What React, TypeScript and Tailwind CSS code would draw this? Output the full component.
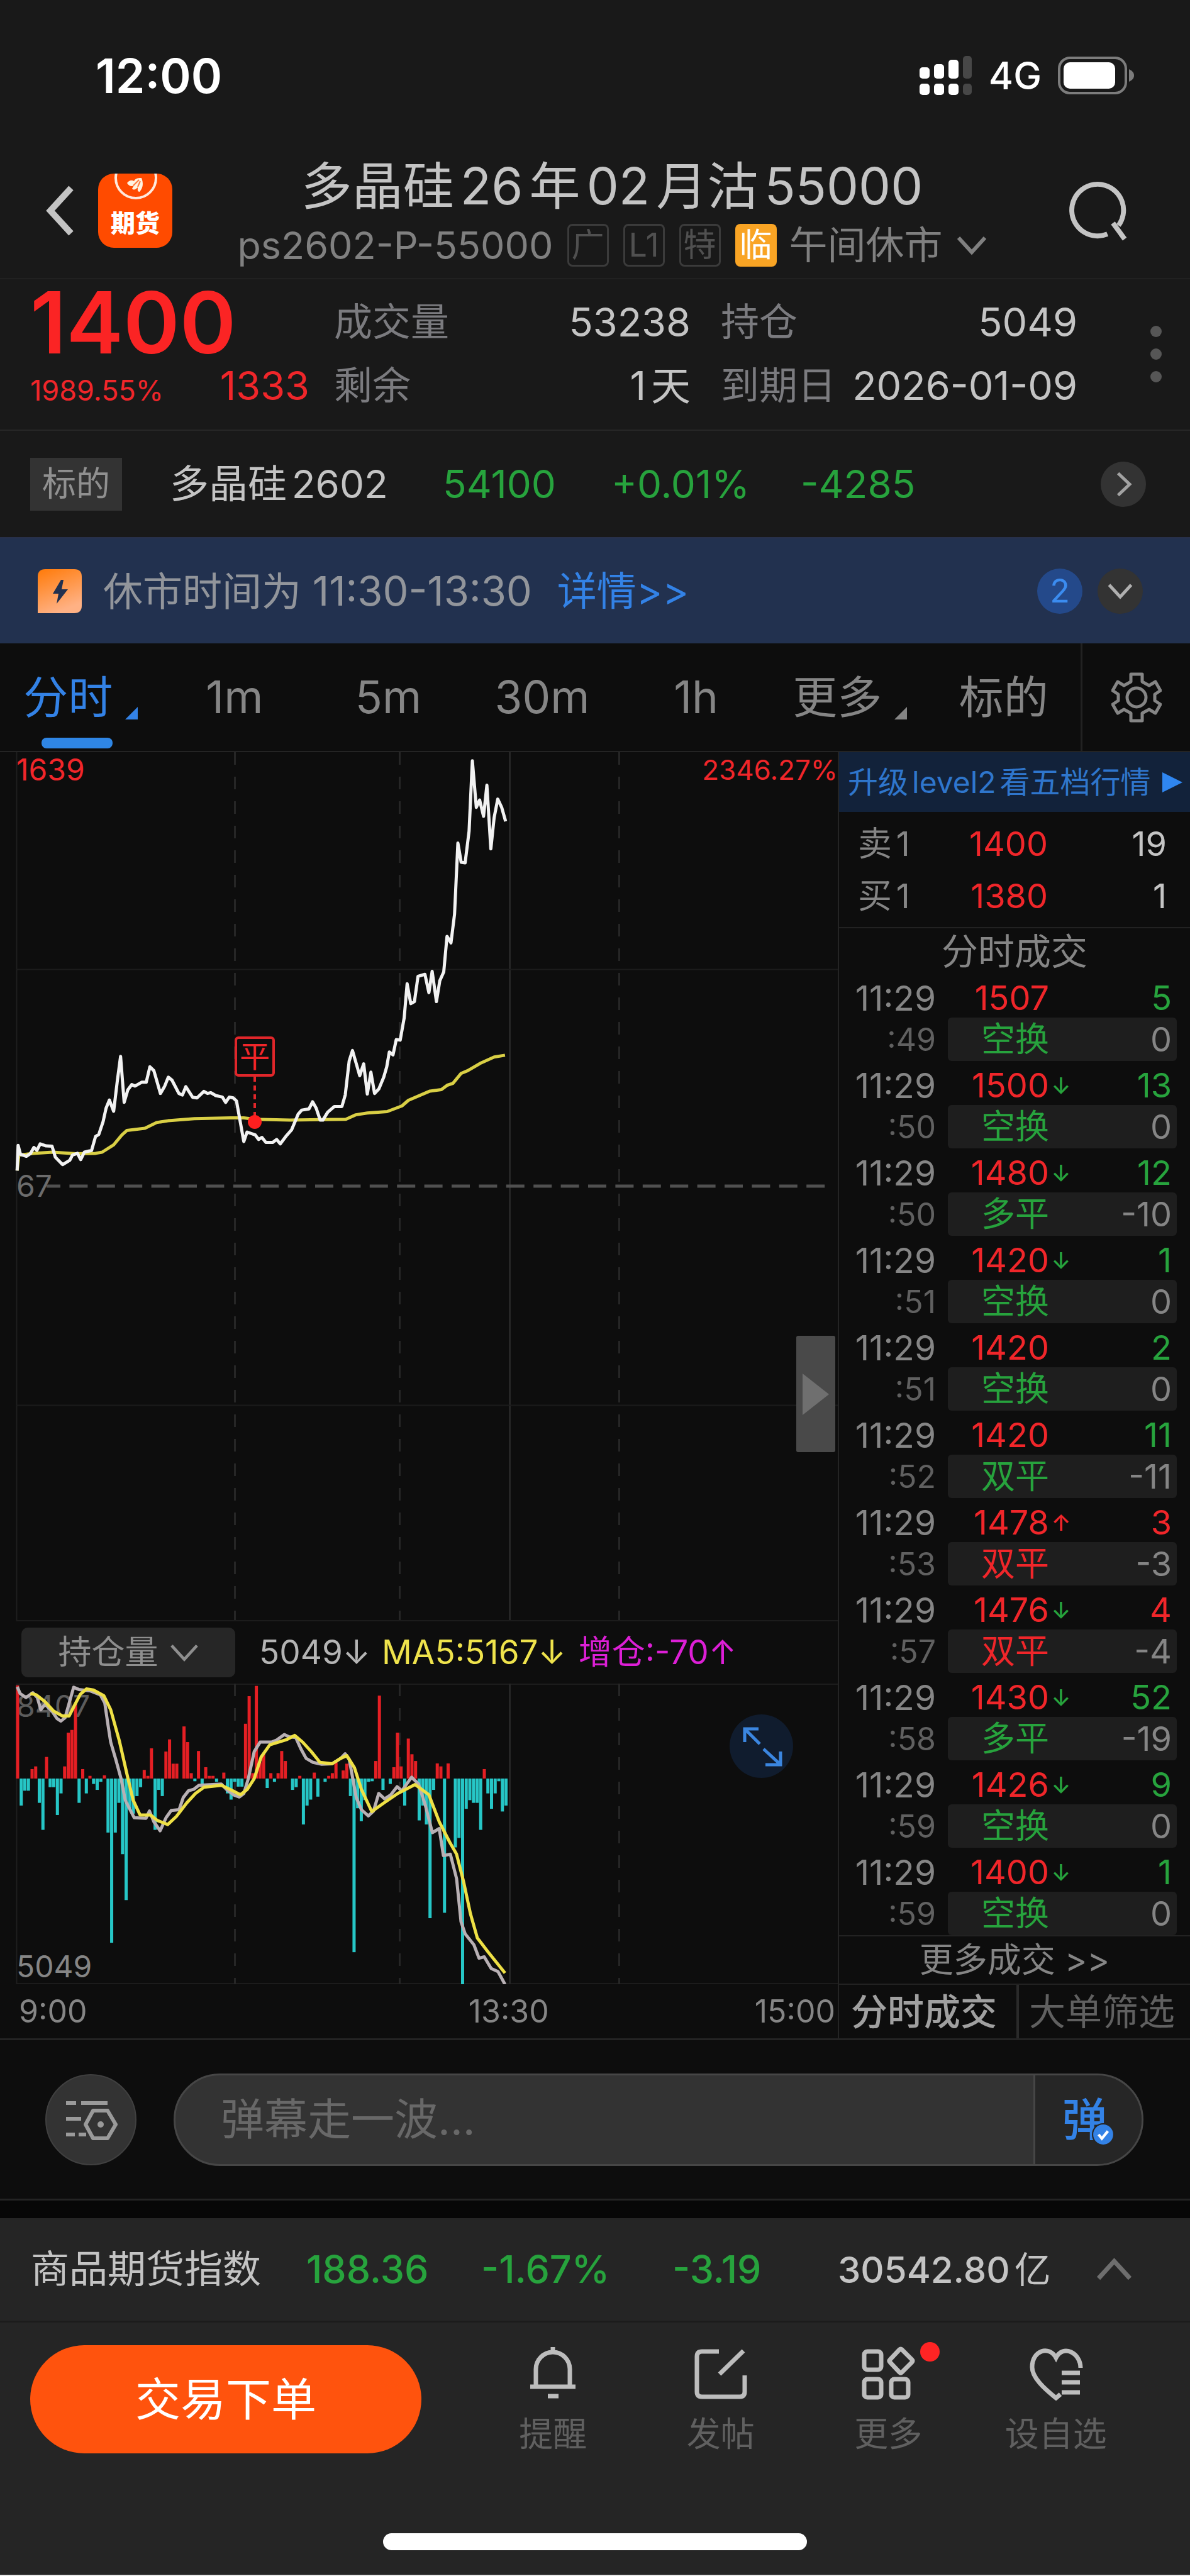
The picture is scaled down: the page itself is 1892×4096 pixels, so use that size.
import React from "react";

type Point = [number, number];

const PRICE: Point[] = [
  [52, 1440], [55, 1355], [62, 1385], [80, 1392], [92, 1383], [103, 1362], [112, 1372], [122, 1350], [140, 1357], [158, 1358],
  [168, 1395], [190, 1420], [212, 1405], [220, 1388], [235, 1382], [245, 1403], [256, 1378], [278, 1372], [290, 1325], [300, 1318],
  [313, 1275], [322, 1230], [332, 1202], [345, 1240], [356, 1140], [366, 1055], [377, 1210], [388, 1168], [400, 1150], [410, 1155],
  [430, 1142], [444, 1142], [455, 1090], [467, 1103], [487, 1180], [500, 1155], [511, 1125], [522, 1135], [543, 1180], [554, 1185],
  [564, 1157], [585, 1193], [598, 1195], [619, 1173], [630, 1180], [640, 1177], [655, 1187], [675, 1192], [685, 1210], [696, 1192],
  [708, 1195], [718, 1205], [740, 1342], [750, 1310], [775, 1320], [785, 1335], [795, 1328], [807, 1345], [828, 1345], [840, 1335],
  [851, 1350], [870, 1322], [885, 1303], [905, 1250], [916, 1236], [938, 1232], [949, 1208], [960, 1230], [972, 1270], [980, 1270],
  [995, 1243], [1015, 1224], [1038, 1224], [1048, 1185], [1060, 1070], [1070, 1035], [1092, 1120], [1104, 1080], [1115, 1182],
  [1126, 1108], [1137, 1180], [1150, 1165], [1165, 1125], [1174, 1090], [1182, 1040], [1193, 1050], [1203, 998], [1215, 1000],
  [1227, 925], [1236, 810], [1247, 877], [1258, 870], [1269, 785], [1290, 778], [1302, 840], [1312, 768], [1325, 870], [1335, 800],
  [1347, 770], [1357, 650], [1369, 672], [1380, 575], [1390, 335], [1400, 400], [1412, 402], [1424, 295], [1434, 58], [1446, 215],
  [1456, 190], [1468, 245], [1478, 140], [1490, 355], [1500, 250], [1511, 187], [1523, 215], [1535, 262],
];

const AVERAGE: Point[] = [
  [52, 1440], [57, 1388], [100, 1382], [160, 1378], [230, 1383], [290, 1382], [310, 1378], [345, 1353], [370, 1320], [385, 1305],
  [440, 1297], [475, 1278], [510, 1272], [590, 1265], [700, 1262], [740, 1262], [775, 1267], [880, 1270], [1050, 1267],
  [1080, 1252], [1115, 1246], [1175, 1241], [1220, 1222], [1240, 1203], [1305, 1172], [1340, 1167], [1358, 1152], [1375, 1146],
  [1400, 1112], [1420, 1103], [1460, 1077], [1500, 1057], [1533, 1051],
];

const INTEREST: Point[] = [
  [50, 260], [58, 285], [75, 300], [95, 282], [108, 300], [118, 345], [130, 325], [150, 350], [165, 378], [176, 387], [188, 375],
  [200, 320], [213, 262], [228, 270], [260, 275], [290, 290], [303, 320], [312, 400], [320, 465], [335, 530], [350, 600],
  [362, 680], [388, 745], [422, 747], [432, 720], [445, 760], [463, 793], [480, 745], [495, 718], [518, 715], [530, 670],
  [545, 645], [560, 640], [575, 625], [640, 620], [655, 640], [675, 660], [692, 668], [705, 655], [718, 600], [735, 500],
  [752, 465], [785, 465], [800, 457], [822, 437], [835, 445], [855, 448], [870, 490], [885, 525], [905, 540], [930, 547],
  [960, 545], [985, 525], [998, 508], [1010, 530], [1030, 670], [1045, 715], [1065, 738], [1080, 720], [1095, 655], [1112, 675],
  [1130, 660], [1148, 630], [1162, 645], [1190, 595], [1210, 620], [1230, 700], [1250, 800], [1270, 785], [1282, 885],
  [1302, 880], [1320, 970], [1333, 1130], [1345, 1175], [1370, 1215], [1385, 1265], [1400, 1260], [1420, 1303], [1440, 1315],
  [1460, 1362],
];

const INTEREST_MA5: Point[] = [
  [88, 285], [105, 290], [130, 315], [155, 350], [180, 368], [200, 368], [215, 330], [232, 288], [250, 268], [270, 272],
  [300, 293], [320, 345], [345, 460], [370, 600], [385, 680], [405, 735], [435, 735], [455, 755], [485, 770], [510, 740],
  [540, 690], [565, 655], [590, 632], [640, 625], [665, 640], [695, 660], [715, 640], [735, 600], [755, 520], [780, 475],
  [830, 455], [852, 440], [875, 465], [900, 500], [925, 540], [960, 545], [985, 525], [1003, 515], [1025, 560], [1045, 640],
  [1075, 722], [1110, 690], [1150, 655], [1200, 622], [1240, 660], [1270, 760], [1300, 835], [1320, 880], [1340, 980],
  [1360, 1100], [1380, 1190], [1410, 1240], [1460, 1320],
];

const CHANGES = [
  345, -100, -45, -45, 35, 45, -90, -190, 80, -32, -32, -135, -55, 45, 170, 180, 275, -90, 35, -55, 10, -20, -42, -12, 12, -200,
  -608, -200, -90, -280, -450, -110, -130, -65, -32, 32, 10, 112, -190, -42, -65, 100, 145, 55, 55, 0, 193, 135, 20, -10, 102,
  -20, 42, 10, 10, -12, 0, 22, -55, -78, -12, -30, -30, 203, 305, 20, 343, 60, 95, -35, 20, -12, 20, 102, 65, 0, -42, -32, 10,
  -170, -100, -78, 22, -67, 0, -12, 10, 20, 68, 0, 30, 55, -65, -643, -110, -158, -80, -12, -10, 65, 307, -42, 0, -20, 42, 170,
  45, -100, 148, 90, 65, -155, -100, -170, -517, -42, 56, 45, -497, 56, 0, -255, -220, -762, -112, -80, -90, -90, -190, 35, -55,
  -112, -55, -10, -122, -100,
];

const toPoints = (data: Point[], sx: number, sy: number, dy: number) =>
  data.map(([x, y]) => `${(x * sx).toFixed(1)},${(y * sy + dy).toFixed(1)}`).join(" ");

const RED = "text-[#f0262a]";
const GREEN = "text-[#27a33d]";

type Trade = { s: string; price: string; dir?: "up" | "down"; qty: string; kind: string; delta: string; up?: boolean };

const TRADES: Trade[] = [
  { s: ":49", price: "1507", qty: "5", kind: "空换", delta: "0" },
  { s: ":50", price: "1500", dir: "down", qty: "13", kind: "空换", delta: "0" },
  { s: ":50", price: "1480", dir: "down", qty: "12", kind: "多平", delta: "-10" },
  { s: ":51", price: "1420", dir: "down", qty: "1", kind: "空换", delta: "0" },
  { s: ":51", price: "1420", qty: "2", kind: "空换", delta: "0" },
  { s: ":52", price: "1420", qty: "11", kind: "双平", delta: "-11" },
  { s: ":53", price: "1478", dir: "up", qty: "3", kind: "双平", delta: "-3", up: true },
  { s: ":57", price: "1476", dir: "down", qty: "4", kind: "双平", delta: "-4", up: true },
  { s: ":58", price: "1430", dir: "down", qty: "52", kind: "多平", delta: "-19" },
  { s: ":59", price: "1426", dir: "down", qty: "9", kind: "空换", delta: "0" },
  { s: ":59", price: "1400", dir: "down", qty: "1", kind: "空换", delta: "0" },
];

function Chevron({ className, d, width }: { className: string; d: string; width: number }) {
  return (
    <svg className={className} viewBox="0 0 48 48" fill="none" stroke="currentColor" strokeWidth={width} aria-hidden="true">
      <path d={d} />
    </svg>
  );
}

const DOWN = "M3 12 24 35 45 12";
const UP = "M3 36 24 13 45 36";
const RIGHT = "M14 3 36 24 14 45";

function StatusBar() {
  return (
    <div className="flex h-[240px] items-center justify-between pl-[152px] pr-[88px] text-white">
      <span className="text-[75px] font-semibold">12:00</span>
      <div className="flex items-center">
        <svg className="h-[62px] w-[84px]" viewBox="0 0 84 62" aria-hidden="true">
          <g fill="#fff">
            <rect x="0" y="18" width="16" height="18" rx="5" />
            <rect x="23" y="13" width="16" height="23" rx="5" />
            <rect x="46" y="6" width="16" height="30" rx="5" />
            <rect x="0" y="44" width="16" height="18" rx="5" />
            <rect x="23" y="44" width="16" height="18" rx="5" />
            <rect x="46" y="44" width="16" height="18" rx="5" />
          </g>
          <g fill="#474747">
            <rect x="69" y="0" width="14" height="36" rx="5" />
            <rect x="69" y="44" width="14" height="18" rx="5" />
          </g>
        </svg>
        <span className="ml-[26px] text-[60px] font-medium">4G</span>
        <svg className="ml-[26px] h-[60px] w-[122px]" viewBox="0 0 122 60" aria-hidden="true">
          <rect x="2" y="2" width="106" height="56" rx="17" fill="none" stroke="#7c7c7c" strokeWidth="4" />
          <rect x="9" y="9" width="82" height="42" rx="10" fill="#fff" />
          <path d="M113 20c6 3 8 6 8 10s-2 7-8 10z" fill="#7c7c7c" />
        </svg>
      </div>
    </div>
  );
}

function Tag({ children }: { children: string }) {
  return (
    <span className="flex h-[68px] w-[66px] items-center justify-center rounded-[8px] border-3 border-[#3b3b3b] text-[52px] text-[#505050]">
      {children}
    </span>
  );
}

function Header() {
  return (
    <header className="flex h-[204px] items-center border-b-2 border-[#212121] pb-[12px]">
      <div className="flex w-[300px] items-center">
        <button aria-label="返回" className="ml-[72px] text-[#c4c4c4]">
          <svg className="h-[80px] w-[48px]" viewBox="0 0 48 80" fill="none" stroke="currentColor" strokeWidth="10" aria-hidden="true">
            <path d="M41 4 8 40l33 36" />
          </svg>
        </button>
        <div className="relative ml-[36px] flex h-[118px] w-[118px] items-end justify-center overflow-hidden rounded-[25px] bg-[#ff4b00] pb-[16px]">
          <svg className="absolute inset-0 h-full w-full" viewBox="0 0 118 118" aria-hidden="true">
            <circle cx="60" cy="7" r="32" fill="none" stroke="#ffe9dc" strokeWidth="4" />
            <path d="M46 15c4-5 8-5 11-3 2-4 5-5 12-5 3 8 3 15-3 22-4 0-3-4-3-7-3 3-6 5-9 2l3-5c-4 2-8 1-11-4z" fill="#fff3e0" />
            <path d="M56 19l9-9M63 21l4-9" stroke="#ff7a3c" strokeWidth="2" />
          </svg>
          <span className="text-[39px] font-black leading-[46px] text-white">期货</span>
        </div>
      </div>
      <div className="flex flex-1 flex-col items-center">
        <h1 className="text-[81px] leading-[110px] whitespace-nowrap text-[#c4c4c4] [text-autospace:normal]">多晶硅26年02月沽55000</h1>
        <div className="flex h-[78px] items-center whitespace-nowrap text-[#808080]">
          <span className="text-[61px]">ps2602-P-55000</span>
          <div className="ml-[22px] flex gap-[23px]">
            <Tag>广</Tag>
            <Tag>L1</Tag>
            <Tag>特</Tag>
            <span className="flex h-[68px] w-[66px] items-center justify-center rounded-[8px] bg-[#f9a424] text-[52px] text-white">临</span>
          </div>
          <button className="ml-[20px] flex items-center text-[61px]">
            午间休市
            <Chevron className="ml-[22px] h-[48px] w-[48px]" d={DOWN} width={6} />
          </button>
        </div>
      </div>
      <div className="w-[246px]">
        <button aria-label="搜索" className="ml-[50px] block text-[#c4c4c4]">
          <svg className="h-[98px] w-[98px]" viewBox="0 0 100 100" fill="none" stroke="currentColor" strokeWidth="8" aria-hidden="true">
            <path d="M66 88A42 42 0 1 1 84 74" />
            <path d="M75 70 94 96" />
          </svg>
        </button>
      </div>
    </header>
  );
}

function Stat({ label, value }: { label: string; value: string }) {
  return (
    <div className="flex h-[101px] items-center justify-between whitespace-nowrap">
      <dt className="text-[61px] text-[#7b7b7f]">{label}</dt>
      <dd className="text-[63px] text-[#c4c4c4] [text-autospace:normal]">{value}</dd>
    </div>
  );
}

function Quote() {
  return (
    <section className="flex border-b-2 border-[#262626] pt-[18px] pb-[19px] pl-[48px] pr-[45px]">
      <div className={`w-[444px] ${RED}`}>
        <div className="flex h-[101px] items-center text-[136px] font-semibold text-[#fb2424]">1400</div>
        <div className="flex h-[101px] items-center justify-between">
          <span className="pt-[14px] text-[45px]">1989.55%</span>
          <span className="text-[63px]">1333</span>
        </div>
      </div>
      <dl className="ml-[39px] flex-1">
        <Stat label="成交量" value="53238" />
        <Stat label="剩余" value="1天" />
      </dl>
      <dl className="ml-[48px] flex-1">
        <Stat label="持仓" value="5049" />
        <Stat label="到期日" value="2026-01-09" />
      </dl>
      <button aria-label="更多行情" className="ml-[116px] flex flex-col items-center justify-center gap-[18px]">
        <i className="h-[18px] w-[18px] rounded-full bg-[#565656]" />
        <i className="h-[18px] w-[18px] rounded-full bg-[#565656]" />
        <i className="h-[18px] w-[18px] rounded-full bg-[#565656]" />
      </button>
    </section>
  );
}

function Underlying() {
  return (
    <section className="flex h-[169px] items-center pl-[48px] pr-[70px] text-[62px] whitespace-nowrap">
      <span className="flex h-[84px] w-[146px] items-center justify-center bg-[#333333] text-[54px] text-[#909090]">标的</span>
      <span className="ml-[76px] w-[434px] text-[#c4c4c4] [text-autospace:normal]">多晶硅2602</span>
      <span className={`w-[268px] ${GREEN}`}>54100</span>
      <span className={`w-[301px] ${GREEN}`}>+0.01%</span>
      <span className={`flex-1 ${GREEN}`}>-4285</span>
      <button aria-label="查看标的" className="flex h-[72px] w-[72px] items-center justify-center rounded-full bg-[#333333] text-[#a2a2a2]">
        <Chevron className="h-[40px] w-[40px]" d={RIGHT} width={6} />
      </button>
    </section>
  );
}

function Notice() {
  return (
    <section className="flex h-[169px] items-center border-t-2 border-[#28304a] bg-[#22314f] pl-[60px] pr-[75px] text-[63px] whitespace-nowrap text-[#92959b]">
      <svg className="h-[70px] w-[70px]" viewBox="0 0 70 70" aria-hidden="true">
        <defs>
          <linearGradient id="flash" x1="0" y1="0" x2="0.4" y2="1">
            <stop offset="0" stopColor="#ff7a08" />
            <stop offset="1" stopColor="#ffb184" />
          </linearGradient>
        </defs>
        <path d="M12 0h46q12 0 12 12v46q0 12-12 12H0V12Q0 0 12 0z" fill="url(#flash)" />
        <path d="M37 17 24 39h9l-3 16 18-23H38l3-15z" fill="#22314f" />
      </svg>
      <span className="ml-[34px]">
        休市时间为 <span className="text-[65px]">11:30-13:30</span>
      </span>
      <a href="#detail" className="ml-[40px] text-[#3382e6]">详情&gt;&gt;</a>
      <span className="ml-auto flex h-[72px] w-[72px] items-center justify-center rounded-full bg-[#24498a] text-[52px] text-[#3b8cf0]">2</span>
      <button aria-label="展开公告" className="ml-[24px] flex h-[72px] w-[72px] items-center justify-center rounded-full bg-[#333333] text-[#b0b0b0]">
        <Chevron className="h-[40px] w-[40px]" d={DOWN} width={6} />
      </button>
    </section>
  );
}

function Corner() {
  return (
    <svg className="mt-[50px] ml-[20px] h-[20px] w-[20px]" viewBox="0 0 20 20" fill="currentColor" aria-hidden="true">
      <path d="M20 0v20H0z" />
    </svg>
  );
}

function Tabs() {
  const cell = "flex flex-1 items-center justify-center";
  return (
    <nav className="flex h-[173px] border-b-2 border-[#242424] bg-[#0d0d0d] text-[71px] text-[#858585]">
      <button className={`relative pl-[6px] text-[#3382e6] ${cell}`}>
        分时
        <Corner />
        <i className="absolute bottom-[4px] left-[66px] h-[17px] w-[113px] rounded-[8px] bg-[#2f86e5]" />
      </button>
      <button className={cell}>1m</button>
      <button className={cell}>5m</button>
      <button className={cell}>30m</button>
      <button className={cell}>1h</button>
      <button className={cell}>
        更多
        <Corner />
      </button>
      <button className={cell}>标的</button>
      <button aria-label="设置" className="flex w-[174px] items-center justify-center border-l-3 border-[#222222]">
        <svg className="h-[80px] w-[80px]" viewBox="0 0 80 80" fill="none" stroke="currentColor" strokeWidth="5" strokeLinejoin="round" aria-hidden="true">
          <path d="M31 3h18v12l11 6 10-6 8 14-9 6v10l9 6-8 14-10-6-11 6v12H31V65l-11-6-10 6L2 51l9-6V35l-9-6 8-14 10 6 11-6z" />
          <circle cx="40" cy="40" r="15" />
        </svg>
      </button>
    </nav>
  );
}

function Grid({ height }: { height: number }) {
  return (
    <>
      <g stroke="#262626" strokeWidth="3" strokeDasharray="20 19">
        <path d={`M373.5 0V${height}M635.5 0V${height}M984.5 0V${height}`} />
      </g>
      <path d={`M26.5 0V${height}`} stroke="#1f1f1f" strokeWidth="2" />
      <path d={`M810.5 0V${height}`} stroke="#262626" strokeWidth="3" />
    </>
  );
}

function PriceChart() {
  return (
    <div className="relative">
      <svg className="block w-full" viewBox="0 0 1332 1382" fill="none" aria-label="分时走势">
        <Grid height={1382} />
        <path d="M26 345.5H1332M26 1038.5H1332M26 1381H1332" stroke="#1c1c1c" strokeWidth="2" />
        <path d="M74 690H1318" stroke="#505050" strokeWidth="5" strokeDasharray="29 14.4" strokeDashoffset="7" />
        <polyline points={toPoints(AVERAGE, 0.52373, 0.47136, -13.5)} stroke="#d9cf45" strokeWidth="5" strokeLinejoin="round" />
        <polyline points={toPoints(PRICE, 0.52373, 0.47136, -13.5)} stroke="#f2f2f2" strokeWidth="5" strokeLinejoin="round" />
        <path d="M405 516V578" stroke="#e0262a" strokeWidth="4" strokeDasharray="8 6" />
        <circle cx="405" cy="588" r="11" fill="#ff1f1f" />
      </svg>
      <span className={`absolute top-0 left-[26px] text-[48px] leading-[56px] ${RED}`}>1639</span>
      <span className={`absolute top-0 right-0 text-[44px] leading-[56px] ${RED}`}>2346.27%</span>
      <span className="absolute top-[49.9%] left-[26px] -translate-y-1/2 text-[48px] leading-[56px] text-[#6c6c6c]">67</span>
      <span className={`absolute top-[452px] left-[373px] flex h-[64px] w-[64px] items-center justify-center rounded-[6px] border-4 border-[#e0262a] text-[48px] leading-[48px] ${RED}`}>
        平
      </span>
      <button aria-label="展开图表" className="absolute top-[928px] right-[4px] flex h-[185px] w-[62px] items-center justify-center rounded-[3px] bg-[#494949]">
        <svg className="h-[66px] w-[42px]" viewBox="0 0 42 66" aria-hidden="true">
          <path d="M0 0 42 33 0 66z" fill="#6f6f6f" />
        </svg>
      </button>
    </div>
  );
}

function InterestChart() {
  const px = 0.5499;
  const py = 0.42945;
  return (
    <div className="relative">
      <span className="absolute top-[8px] left-[26px] text-[48px] leading-[56px] text-[#5c5c5c]">8407</span>
      <svg className="relative block w-full" viewBox="0 0 1332 478" fill="none" aria-label="持仓量走势">
        <path d="M26 1H1332M26 477H1332" stroke="#1c1c1c" strokeWidth="2" />
        <Grid height={478} />
        {CHANGES.map((v, i) => (
          <rect
            key={i}
            x={(50 + i * 10.46) * px - 2}
            y={v > 0 ? 151 - v * py : 151}
            width="5"
            height={Math.abs(v) * py}
            fill={v > 0 ? "#e51f24" : "#26c6c6"}
          />
        ))}
        <polyline points={toPoints(INTEREST, px, py, -106.6)} stroke="#b8b0b4" strokeWidth="5" strokeLinejoin="round" />
        <polyline points={toPoints(INTEREST_MA5, px, py, -106.6)} stroke="#eee045" strokeWidth="5" strokeLinejoin="round" />
      </svg>
      <span className="absolute bottom-0 left-[26px] text-[48px] leading-[56px] text-[#858585]">5049</span>
      <button aria-label="全屏" className="absolute top-[49px] right-[71px] h-[101px] w-[101px] rounded-full bg-[#101c2e] text-[#3b86e0]">
        <svg className="h-full w-full" viewBox="0 0 101 101" fill="none" stroke="currentColor" strokeWidth="5" aria-hidden="true">
          <path d="M46 23H24v21M25 24l23 23M57 80h24V59M80 79 54 55" />
        </svg>
      </button>
    </div>
  );
}

function ChartPanel() {
  return (
    <div className="min-w-0 flex-1">
      <PriceChart />
      <div className="flex h-[99px] items-center pl-[34px] text-[53px] whitespace-nowrap text-[#b4b4b4]">
        <button className="flex h-[79px] w-[340px] items-center justify-center rounded-[10px] bg-[#262626] text-[#8e8e8e]">
          持仓量
          <Chevron className="ml-[18px] h-[46px] w-[46px]" d={DOWN} width={5} />
        </button>
        <span className="ml-[38px]">5049↓</span>
        <span className="ml-[18px] text-[#efe34c]">MA5:5167↓</span>
        <span className="ml-[20px] text-[#dd1fd6]">增仓:-70↑</span>
      </div>
      <InterestChart />
      <div className="grid h-[86px] grid-cols-3 items-center pl-[30px] pr-[4px] text-[50px] text-[#858585]">
        <span>9:00</span>
        <span className="pl-[282px]">13:30</span>
        <span className="text-right">15:00</span>
      </div>
    </div>
  );
}

function TradeRows({ t }: { t: Trade }) {
  const tone = t.up ? RED : GREEN;
  return (
    <>
      <tr className="h-[70px] align-bottom leading-[62px]">
        <td className="pr-[19px] text-right text-[55px] text-[#858585]">11:29</td>
        <td className={`text-right ${RED}`}>{t.price}</td>
        <td className={`text-center text-[36px] font-medium ${t.dir === "up" ? RED : GREEN}`}>{t.dir === "up" ? "↑" : t.dir === "down" ? "↓" : ""}</td>
        <td className={`pr-[8px] text-right ${tone}`}>{t.qty}</td>
        <td />
      </tr>
      <tr className="h-[69px] leading-[68px]">
        <td className="pr-[19px] text-right text-[50px] text-[#606060]">{t.s}</td>
        <td className={`rounded-l-[6px] bg-[#1e1e1e] text-right ${tone}`}>{t.kind}</td>
        <td className="bg-[#1e1e1e]" />
        <td className="rounded-r-[6px] bg-[#1e1e1e] pr-[8px] text-right text-[#858585]">{t.delta}</td>
        <td />
      </tr>
    </>
  );
}

function BidRow({ label, price, qty }: { label: string; price: string; qty: string }) {
  return (
    <tr>
      <td className="pl-[30px] text-[#858585] [text-autospace:normal]">{label}</td>
      <td className={`text-right ${RED}`}>{price}</td>
      <td className="pr-[37px] text-right text-[#c4c4c4]">{qty}</td>
    </tr>
  );
}

function TradePanel() {
  return (
    <div className="w-[560px] shrink-0 border-l-2 border-[#242424]">
      <a href="#level2" className="flex h-[95px] items-center bg-[#12223a] pl-[14px] text-[48px] whitespace-nowrap text-[#2f76cc] [text-autospace:normal]">
        升级level2看五档行情
        <svg className="mr-[12px] ml-auto h-[32px] w-[32px]" viewBox="0 0 32 32" aria-hidden="true">
          <path d="M0 0 32 16 0 32z" fill="#2f86f0" />
        </svg>
      </a>
      <div className="pt-[9px] pb-[8px]">
        <table className="w-full table-fixed text-[54px] leading-[83px]">
          <colgroup>
            <col className="w-[173px]" />
            <col className="w-[159px]" />
            <col />
          </colgroup>
          <tbody>
            <BidRow label="卖1" price="1400" qty="19" />
            <BidRow label="买1" price="1380" qty="1" />
          </tbody>
        </table>
      </div>
      <h2 className="h-[74px] border-t-2 border-[#222222] text-center text-[58px] leading-[74px] text-[#858585]">分时成交</h2>
      <table className="w-full table-fixed border-separate border-spacing-0 text-[54px] whitespace-nowrap">
        <colgroup>
          <col className="w-[173px]" />
          <col className="w-[161px]" />
          <col className="w-[38px]" />
          <col />
          <col className="w-[21px]" />
        </colgroup>
        <tbody>
          {TRADES.map((t, i) => (
            <TradeRows key={i} t={t} />
          ))}
        </tbody>
      </table>
      <button className="block h-[77px] w-full border-t-2 border-[#222222] text-[54px] text-[#858585]">更多成交 &gt;&gt;</button>
      <div className="flex h-[87px] items-center border-t-2 border-[#222222] text-[58px] whitespace-nowrap">
        <button className="w-[282px] pr-[12px] font-medium text-[#a0a0a0]">分时成交</button>
        <button className="h-full flex-1 border-l-4 border-[#2a2a2a] pr-[8px] text-[#606060]">大单筛选</button>
      </div>
    </div>
  );
}

function Barrage() {
  return (
    <section className="flex h-[258px] items-center border-y-3 border-[#242424] bg-[#0d0d0d] pl-[72px] pr-[74px]">
      <button aria-label="弹幕设置" className="flex h-[145px] w-[145px] items-center justify-center rounded-full border-2 border-[#404040] bg-[#333333] text-[#9a9a9a]">
        <svg className="h-[80px] w-[84px]" viewBox="0 0 84 80" fill="none" stroke="currentColor" strokeWidth="6" aria-hidden="true">
          <path d="M2 14h16M26 14h42M2 39h24M2 64h14M22 64h12" />
          <path d="M45 26h23l13 22-13 22H45L33 48z" strokeLinejoin="round" />
          <circle cx="57" cy="48" r="5" fill="currentColor" stroke="none" />
        </svg>
      </button>
      <div className="ml-[59px] flex h-[147px] flex-1 overflow-hidden rounded-full border-3 border-[#464646] bg-[#333333]">
        <input
          aria-label="弹幕"
          placeholder="弹幕走一波..."
          className="min-w-0 flex-1 bg-transparent pl-[72px] text-[69px] text-[#c4c4c4] outline-none placeholder:text-[#686868]"
        />
        <button className="w-[172px] border-l-3 border-[#464646] bg-[#262626] pr-[12px] text-[72px] font-medium text-[#3382e6]">
          <span className="relative inline-block">
            弹
            <svg className="absolute right-[-11px] bottom-[-6px] h-[36px] w-[36px]" viewBox="0 0 34 34" aria-hidden="true">
              <circle cx="17" cy="17" r="16" fill="#3382e6" stroke="#262626" strokeWidth="2" />
              <path d="M10 17l5 6 9-11" fill="none" stroke="#fff" strokeWidth="4" />
            </svg>
          </span>
        </button>
      </div>
    </section>
  );
}

function IndexBar() {
  return (
    <section className="flex h-[166px] items-center border-b-3 border-[#1c1c1c] pr-[92px] pl-[49px] text-[61px] font-medium whitespace-nowrap">
      <span className="w-[438px] font-normal text-[#c4c4c4]">商品期货指数</span>
      <span className={`w-[278px] ${GREEN}`}>188.36</span>
      <span className={`w-[304px] ${GREEN}`}>-1.67%</span>
      <span className={`w-[263px] ${GREEN}`}>-3.19</span>
      <span className="text-[58px] text-[#c4c4c4] [text-autospace:normal]">
        30542.80<span className="font-normal">亿</span>
      </span>
      <button aria-label="展开指数" className="ml-auto text-[#6e6e6e]">
        <Chevron className="block h-[57px] w-[57px]" d={UP} width={6} />
      </button>
    </section>
  );
}

function Action({ label, children, badge }: { label: string; children: React.ReactNode; badge?: boolean }) {
  return (
    <button className="flex flex-1 flex-col items-center text-[54px] leading-[60px] text-[#606060]">
      <span className="relative mb-[24px] block h-[88px] w-[88px] text-[#bdbdbd]">
        <svg className="h-full w-full" viewBox="0 0 88 88" fill="none" stroke="currentColor" strokeWidth="7" aria-hidden="true">
          {children}
        </svg>
        {badge && <i className="absolute top-[-5px] right-[-38px] h-[31px] w-[31px] rounded-full bg-[#ff2424]" />}
      </span>
      {label}
    </button>
  );
}

function BottomBar() {
  return (
    <footer className="flex h-[335px] items-start pt-[36px] pr-[80px] pl-[48px]">
      <button className="mr-[76px] h-[172px] w-[622px] rounded-full bg-[#ff530d] text-[72px] text-white">交易下单</button>
      <div className="flex flex-1">
        <Action label="提醒">
          <path d="M44 3v9M17 66V38a27 27 0 0 1 54 0v28M8 66h72M36 81h17" />
        </Action>
        <Action label="发帖">
          <path d="M41 10H14q-8 0-8 8v56q0 8 8 8h60q8 0 8-8V48M42 46 80 9" />
        </Action>
        <Action label="更多" badge>
          <rect x="6" y="10" width="27" height="29" rx="5" />
          <rect x="6" y="54" width="27" height="29" rx="5" />
          <rect x="49" y="54" width="27" height="29" rx="5" />
          <path d="m66 7 16 16q2 2 0 4L66 43q-2 2-4 0L47 27q-2-2 0-4L62 7q2-2 4 0z" />
        </Action>
        <Action label="设自选">
          <path d="M83 36C83 12 55-2 44 20 33 0 6 8 6 35c0 16 18 33 38 49l7-6M53 44h29M53 59h29M53 75h29" />
        </Action>
      </div>
    </footer>
  );
}

export default function App() {
  return (
    <main className="w-full bg-[#191919] font-['Inter','Noto_Sans_CJK_SC',sans-serif] leading-none">
      <StatusBar />
      <Header />
      <Quote />
      <Underlying />
      <Notice />
      <Tabs />
      <section className="flex bg-[#0d0d0d]">
        <ChartPanel />
        <TradePanel />
      </section>
      <Barrage />
      <div className="h-[28px] bg-[#070707]" />
      <div className="border-b-2 border-[#e8e8e8] bg-[#252525]">
        <IndexBar />
        <BottomBar />
        <div className="flex justify-center pb-[39px]">
          <div className="h-[27px] w-[674px] rounded-full bg-white" />
        </div>
      </div>
    </main>
  );
}
